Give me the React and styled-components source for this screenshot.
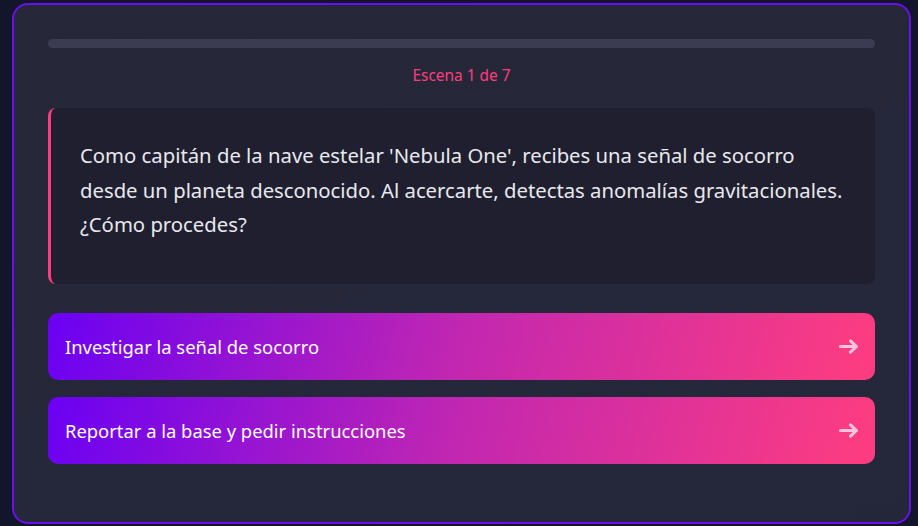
import React from 'react';
import styled, { createGlobalStyle } from 'styled-components';

const GlobalStyle = createGlobalStyle`
  * { box-sizing: border-box; }
  body {
    margin: 0;
    background: #13162a;
    font-family: "Noto Sans", "Open Sans", sans-serif;
  }
`;

const scene = {
  index: 1,
  total: 7,
  progress: 0,
  text: "Como capitán de la nave estelar 'Nebula One', recibes una señal de socorro desde un planeta desconocido. Al acercarte, detectas anomalías gravitacionales. ¿Cómo procedes?",
  options: [
    'Investigar la señal de socorro',
    'Reportar a la base y pedir instrucciones',
  ],
};

const ArrowIcon = () => (
  <svg width="20" height="15" viewBox="0 0 20 15" fill="none">
    <path
      d="M1.5 7.5H17.5M11.5 1.8L17.5 7.5L11.5 13.2"
      stroke="currentColor"
      strokeWidth="3"
      strokeLinecap="round"
      strokeLinejoin="round"
    />
  </svg>
);

const App = () => {
  return (
    <>
      <GlobalStyle />
      <Page>
        <Card>
          <Track>
            <Fill style={{ width: `${scene.progress}%` }} />
          </Track>
          <Counter>Escena {scene.index} de {scene.total}</Counter>
          <Story>
            <StoryText>{scene.text}</StoryText>
          </Story>
          <Options>
            {scene.options.map((opt) => (
              <Choice key={opt}>
                <span>{opt}</span>
                <Arrow>
                  <ArrowIcon />
                </Arrow>
              </Choice>
            ))}
          </Options>
        </Card>
      </Page>
    </>
  );
};

export default App;

const Page = styled.div`
  padding: 3px 7px 2px 12px;
  min-height: 526px;
`;

const Card = styled.div`
  width: 899px;
  height: 521px;
  background: linear-gradient(160deg, #262839 0%, #24263a 100%);
  border: 2px solid #6a0fef;
  border-radius: 16px;
  padding: 34px 34px 0;
`;

const Track = styled.div`
  height: 9px;
  background: #3b3c51;
  border-radius: 5px;
  overflow: hidden;
`;

const Fill = styled.div`
  height: 100%;
  background: #ff3d7f;
`;

const Counter = styled.div`
  margin-top: 18px;
  text-align: center;
  color: #ff3d7f;
  font-size: 15.4px;
  line-height: 20px;
`;

const Story = styled.div`
  margin-top: 22px;
  background: #1f1f2f;
  border-left: 3px solid #ff3d7f;
  border-radius: 8px;
  padding: 30px 31px 40px 29px;
  height: 176px;
`;

const StoryText = styled.p`
  margin: 0;
  color: #e8e8ee;
  font-size: 20.3px;
  line-height: 34.5px;
`;

const Options = styled.div`
  margin-top: 29px;
  display: flex;
  flex-direction: column;
  gap: 17px;
`;

const Choice = styled.button`
  display: flex;
  align-items: center;
  justify-content: space-between;
  height: 67px;
  padding: 0 17px;
  border: none;
  border-radius: 10px;
  background: linear-gradient(105deg, #6a00f4 0%, #c227b0 50%, #ff3d7f 100%);
  color: #ffffff;
  font-family: inherit;
  font-size: 18.4px;
  text-align: left;
  cursor: pointer;
`;

const Arrow = styled.span`
  display: flex;
  margin-right: -1px;
  color: rgba(255, 220, 236, 0.85);
`;
